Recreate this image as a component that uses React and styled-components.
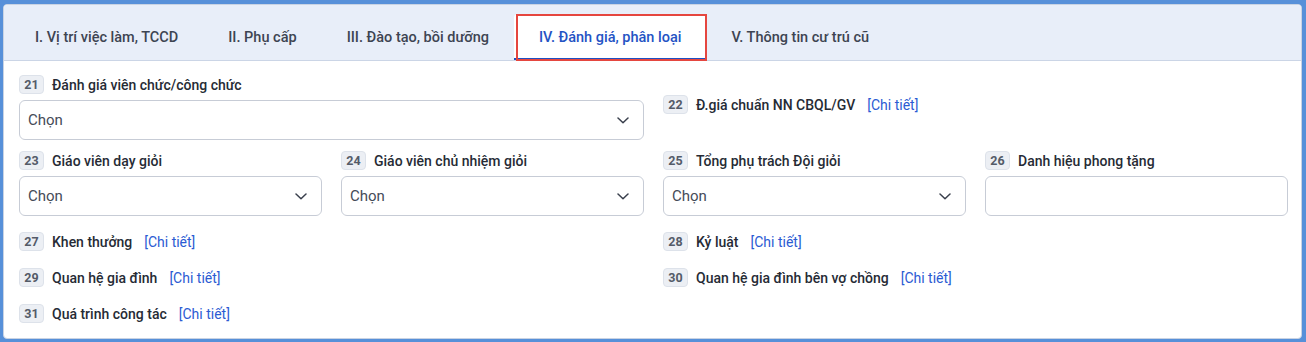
import React from "react";
import styled, { createGlobalStyle } from "styled-components";

const GlobalStyle = createGlobalStyle`
  * { box-sizing: border-box; }
  html, body {
    margin: 0;
    padding: 0;
    background: #5790d9;
    font-family: Roboto, "Liberation Sans", Arial, sans-serif;
  }
`;

const Page = styled.div`
  padding: 4px 4px 3px 3px;
  height: 342px;
`;

const Card = styled.div`
  background: #ffffff;
  border: 1px solid #c9d3e3;
  border-radius: 4px;
  height: 335px;
  overflow: hidden;
`;

const TabBar = styled.div`
  display: flex;
  align-items: flex-end;
  height: 56px;
  padding-left: 6px;
  background: #e8eef9;
  border-bottom: 1px solid #cbd5e6;
`;

const Tab = styled.div`
  position: relative;
  display: flex;
  align-items: center;
  height: 46px;
  padding: 2px 25px 0;
  font-size: 14.5px;
  font-weight: 500;
  color: ${({ active }) => (active ? "#2453c4" : "#3d4452")};
  background: ${({ active }) => (active ? "#ffffff" : "transparent")};
  border-radius: 4px 4px 0 0;
  border-bottom: 2px solid ${({ active }) => (active ? "#1f4fc2" : "transparent")};
  white-space: nowrap;

  &::after {
    content: "";
    display: ${({ active }) => (active ? "block" : "none")};
    position: absolute;
    left: 2px;
    right: -1px;
    top: 0;
    bottom: -3px;
    border: 2px solid #e5463f;
  }
`;

const Content = styled.div`
  padding: 14px 13px 0 15px;
`;

const FormGrid = styled.div`
  display: grid;
  grid-template-columns: repeat(4, 1fr);
  column-gap: 19px;
  row-gap: 11px;
`;

const LinkGrid = styled.div`
  display: grid;
  grid-template-columns: repeat(2, 1fr);
  column-gap: 19px;
  row-gap: 17px;
  margin-top: 16px;
`;

const Field = styled.div`
  display: flex;
  flex-direction: column;
  gap: 6px;
  grid-column: span ${({ span }) => span || 1};
  align-self: ${({ offset }) => (offset ? "start" : "stretch")};
  margin-top: ${({ offset }) => offset || 0}px;
`;

const LabelRow = styled.div`
  display: flex;
  align-items: center;
  height: 19px;
`;

const Badge = styled.span`
  display: inline-flex;
  align-items: center;
  justify-content: center;
  width: 25px;
  height: 19px;
  margin-right: 8px;
  border-radius: 4px;
  background: #eceff4;
  border: 1px solid #dde2ea;
  color: #545b68;
  font-size: 12.5px;
  font-weight: 700;
`;

const Label = styled.span`
  font-size: 14px;
  font-weight: 500;
  color: #262b35;
`;

const DetailLink = styled.a`
  margin-left: 12px;
  font-size: 14px;
  color: #2b5bd3;
  text-decoration: none;
`;

const SelectBox = styled.div`
  display: flex;
  align-items: center;
  justify-content: space-between;
  height: 40px;
  padding: 0 14px 0 8px;
  border: 1px solid #c7ccd6;
  border-radius: 6px;
  background: #ffffff;
  font-size: 15px;
  color: #454b57;
`;

const Chevron = () => (
  <svg width="12" height="7" viewBox="0 0 12 7" fill="none">
    <path d="M1 1 6 5.8 11 1" stroke="#3a404d" strokeWidth="1.5" strokeLinecap="round" strokeLinejoin="round" />
  </svg>
);

const Select = ({ empty }) => (
  <SelectBox>
    {!empty && (
      <>
        <span>Chọn</span>
        <Chevron />
      </>
    )}
  </SelectBox>
);

const Heading = ({ n, children, link }) => (
  <LabelRow>
    <Badge>{n}</Badge>
    <Label>{children}</Label>
    {link && <DetailLink href="#">[Chi tiết]</DetailLink>}
  </LabelRow>
);

const tabs = [
  "I. Vị trí việc làm, TCCD",
  "II. Phụ cấp",
  "III. Đào tạo, bồi dưỡng",
  "IV. Đánh giá, phân loại",
  "V. Thông tin cư trú cũ",
];

export default function App() {
  return (
    <Page>
      <GlobalStyle />
      <Card>
        <TabBar>
          {tabs.map((t, i) => (
            <Tab key={t} active={i === 3}>
              {t}
            </Tab>
          ))}
        </TabBar>
        <Content>
          <FormGrid>
            <Field span={2}>
              <Heading n="21">Đánh giá viên chức/công chức</Heading>
              <Select />
            </Field>
            <Field span={2} offset={20}>
              <Heading n="22" link>
                Đ.giá chuẩn NN CBQL/GV
              </Heading>
            </Field>
            <Field>
              <Heading n="23">Giáo viên dạy giỏi</Heading>
              <Select />
            </Field>
            <Field>
              <Heading n="24">Giáo viên chủ nhiệm giỏi</Heading>
              <Select />
            </Field>
            <Field>
              <Heading n="25">Tổng phụ trách Đội giỏi</Heading>
              <Select />
            </Field>
            <Field>
              <Heading n="26">Danh hiệu phong tặng</Heading>
              <Select empty />
            </Field>
          </FormGrid>
          <LinkGrid>
            <Heading n="27" link>Khen thưởng</Heading>
            <Heading n="28" link>Kỷ luật</Heading>
            <Heading n="29" link>Quan hệ gia đình</Heading>
            <Heading n="30" link>Quan hệ gia đình bên vợ chồng</Heading>
            <Heading n="31" link>Quá trình công tác</Heading>
          </LinkGrid>
        </Content>
      </Card>
    </Page>
  );
}
